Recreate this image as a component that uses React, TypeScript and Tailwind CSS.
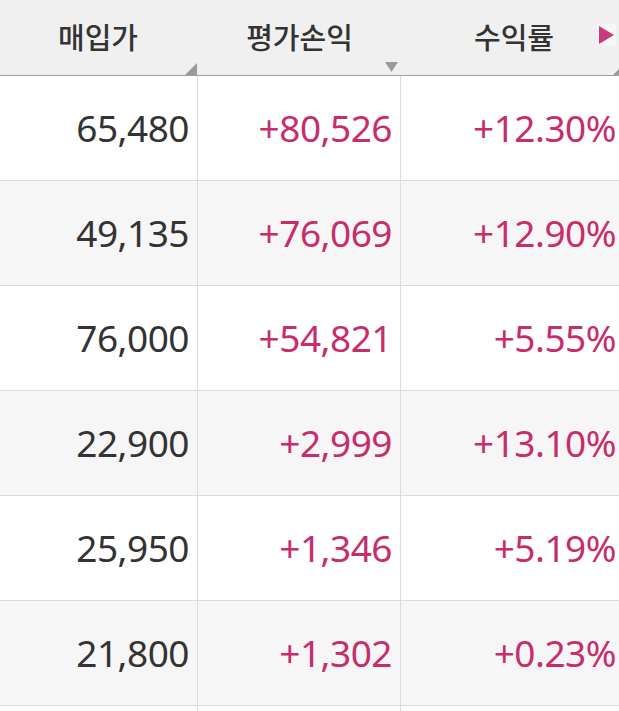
import React from "react";

const rows = [
  ["65,480", "+80,526", "+12.30%"],
  ["49,135", "+76,069", "+12.90%"],
  ["76,000", "+54,821", "+5.55%"],
  ["22,900", "+2,999", "+13.10%"],
  ["25,950", "+1,346", "+5.19%"],
  ["21,800", "+1,302", "+0.23%"],
];

const numFont = { fontFamily: '"Noto Sans", "Noto Sans CJK KR", sans-serif' };

export default function App() {
  return (
    <div
      className="w-[619px] h-[711px] overflow-hidden bg-white"
      style={{ fontFamily: '"Noto Sans CJK KR", "Noto Sans", sans-serif' }}
    >
      {/* header */}
      <div className="grid grid-cols-[198px_203px_1fr] h-[76px] bg-[#f0f0f0] border-b border-[#a0a0a0]">
        <div className="relative flex items-center justify-center text-[29px] font-medium text-[#333] pb-[2px] pr-[2px]">
          매입가
          <svg className="absolute right-[1px] bottom-0" width="12" height="12" viewBox="0 0 12 12">
            <polygon points="12,0 12,12 0,12" fill="#9a9a9a" />
          </svg>
        </div>
        <div className="relative flex items-center justify-center text-[29px] font-medium text-[#333] pb-[2px]">
          평가손익
          <svg className="absolute right-[3px] bottom-[3px]" width="13" height="10" viewBox="0 0 13 10">
            <polygon points="0,0 13,0 6.5,10" fill="#9a9a9a" />
          </svg>
        </div>
        <div className="relative flex items-center justify-center text-[29px] font-medium text-[#333] pb-[2px] pl-[8px]">
          수익률
          <div className="absolute right-[3px] top-[24px] w-[19px] h-[21px] bg-[#f7f7f7] flex items-center justify-center">
            <svg width="15" height="18" viewBox="0 0 15 18">
              <polygon points="0,0 15,9 0,18" fill="#cc3a7c" />
            </svg>
          </div>
          <svg className="absolute right-0 bottom-0" width="6" height="6" viewBox="0 0 6 6">
            <polygon points="6,0 6,6 0,6" fill="#9a9a9a" />
          </svg>
        </div>
      </div>
      {/* rows */}
      {rows.map((r, i) => (
        <div
          key={i}
          className={`grid grid-cols-[198px_203px_1fr] h-[105px] border-b border-[#dcdcdc] ${
            i % 2 === 1 ? "bg-[#f6f6f6]" : "bg-white"
          }`}
          style={numFont}
        >
          <div className="flex items-center justify-end pr-[8px] border-r border-[#dcdcdc] text-[37px] text-[#333] tracking-[-0.5px]">
            {r[0]}
          </div>
          <div className="flex items-center justify-end pr-[8px] border-r border-[#dcdcdc] text-[37px] text-[#c72d6c] tracking-[-0.5px]">
            {r[1]}
          </div>
          <div className="flex items-center justify-end pr-[3px] text-[37px] text-[#c72d6c] tracking-[-0.5px]">
            {r[2]}
          </div>
        </div>
      ))}
      <div className="grid grid-cols-[198px_203px_1fr] h-[105px] bg-white">
        <div className="border-r border-[#dcdcdc]" />
        <div className="border-r border-[#dcdcdc]" />
        <div />
      </div>
    </div>
  );
}
